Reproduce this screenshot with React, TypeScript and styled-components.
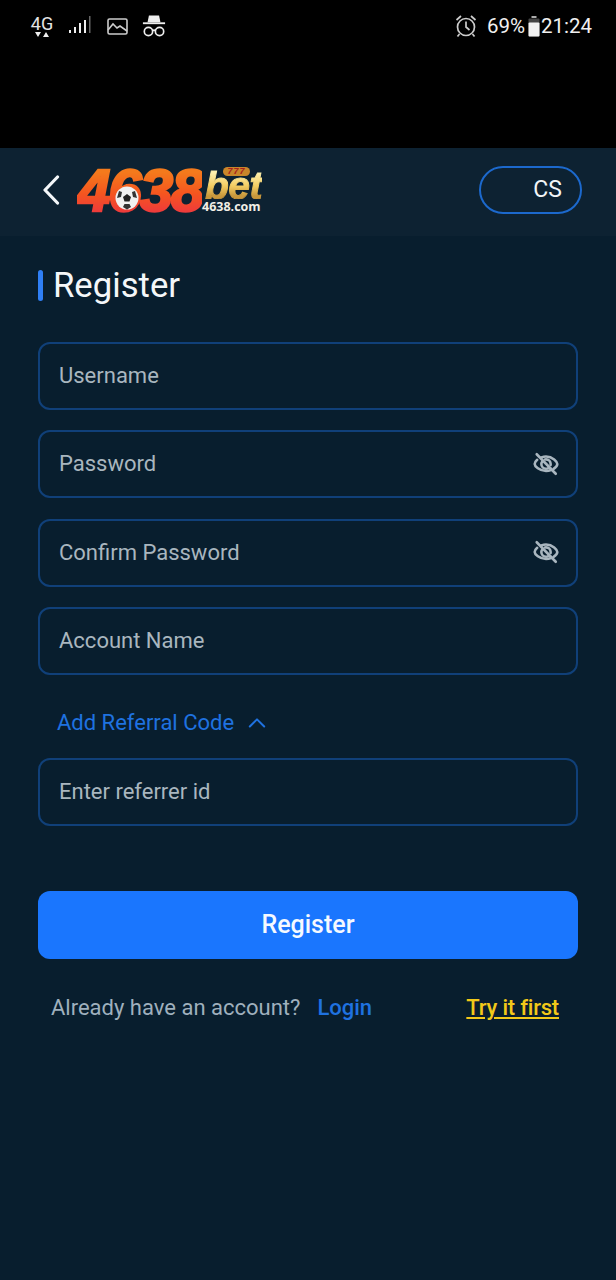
import React from "react";
import styled, { createGlobalStyle } from "styled-components";

const Global = createGlobalStyle`
  html, body { margin: 0; padding: 0; background: #081e2e; }
  * { box-sizing: border-box; }
  body { font-family: Roboto, "Liberation Sans", sans-serif; }
`;

const Page = styled.div`
  width: 616px;
  height: 1280px;
  background: #081e2e;
  display: flex;
  flex-direction: column;
  overflow: hidden;
`;

const StatusBar = styled.div`
  height: 148px;
  background: #000;
  padding: 12px 24px 0 30px;
  display: flex;
  align-items: flex-start;
  justify-content: space-between;
  color: #e8e8e8;
`;

const StatusGroup = styled.div`
  display: flex;
  align-items: center;
  height: 28px;
`;

const NetBlock = styled.div`
  display: flex;
  flex-direction: column;
  align-items: center;
  width: 24px;
  margin-right: 15px;
  font-size: 18px;
  line-height: 17px;
  color: #e4e4e4;
`;

const StatusText = styled.span`
  font-size: 20.500px;
  line-height: 28px;
  color: #f0f0f0;
`;

const Header = styled.header`
  height: 88px;
  background: #0d2232;
  display: flex;
  align-items: center;
  justify-content: space-between;
  padding: 0 34px 4px 42px;
`;

const HeaderLeft = styled.div`
  display: flex;
  align-items: center;
`;

const Logo = styled.div`
  position: relative;
  display: flex;
  align-items: flex-start;
  margin-left: 17px;
  width: 190px;
  height: 52px;
`;

const LogoDigits = styled.span`
  font-family: "Liberation Sans", sans-serif;
  font-style: italic;
  font-weight: 700;
  font-size: 60px;
  line-height: 54px;
  letter-spacing: -2px;
  -webkit-text-stroke: 2.500px transparent;
  background: linear-gradient(180deg, #f47a1c 15%, #f5551f 55%, #ee3a3c 90%);
  -webkit-background-clip: text;
  background-clip: text;
  color: transparent;
`;

const LogoBet = styled.span`
  position: absolute;
  left: 128px;
  top: 6px;
  height: 29px;
  font-family: "Liberation Sans", sans-serif;
  font-style: italic;
  font-weight: 700;
  font-size: 39px;
  line-height: 31px;
  letter-spacing: -0.500px;
  -webkit-text-stroke: 1px transparent;
  background: linear-gradient(180deg, #fff1ae 10%, #f3cd62 55%, #c8973b 90%);
  -webkit-background-clip: text;
  background-clip: text;
  color: transparent;
`;

const LogoDomain = styled.span`
  position: absolute;
  left: 125px;
  top: 36px;
  font-family: "Open Sans", sans-serif;
  font-weight: 700;
  font-size: 12.500px;
  line-height: 14px;
  color: #f2efe6;
`;

const Ball = styled.svg`
  position: absolute;
  left: 38px;
  top: 22px;
`;

const Slots = styled.span`
  position: absolute;
  left: 146px;
  top: 3px;
  width: 27px;
  height: 9px;
  border-radius: 5px;
  background: #c9862a;
  color: #a8221c;
  font-family: "Liberation Sans", sans-serif;
  font-weight: 700;
  font-style: italic;
  font-size: 9px;
  line-height: 9px;
  text-align: center;
  letter-spacing: 1px;
`;

const CsPill = styled.button`
  width: 103px;
  height: 48px;
  border: 2px solid #1c69cd;
  border-radius: 24px;
  background: transparent;
  color: #f2f5f7;
  font-family: Roboto, sans-serif;
  font-size: 23px;
  text-align: right;
  padding: 0 18px 2px 0;
`;

const Main = styled.main`
  padding: 29px 38px 0;
  display: flex;
  flex-direction: column;
`;

const Title = styled.h1`
  margin: 0 0 37px;
  font-size: 34.700px;
  line-height: 40px;
  font-weight: 400;
  color: #f4f7f9;
  display: flex;
  align-items: center;
  gap: 10px;
  &::before {
    content: "";
    width: 5px;
    height: 31px;
    border-radius: 3px;
    background: #2f7ff5;
  }
`;

const Fields = styled.div`
  display: flex;
  flex-direction: column;
  gap: 20.300px;
`;

const Field = styled.div`
  height: 68px;
  border: 2px solid #104079;
  border-radius: 12px;
  display: flex;
  align-items: center;
  justify-content: space-between;
  padding: 0 17px 1px 19px;
  font-size: 22px;
  color: #a9b6bf;
  background: #081e2e;
`;

const ReferralToggle = styled.div`
  display: flex;
  align-items: center;
  gap: 14px;
  margin: 33px 0 21px 19px;
  height: 29px;
  font-size: 22px;
  color: #1f72e0;
`;

const SubmitButton = styled.button`
  margin-top: 65px;
  height: 68px;
  border: none;
  border-radius: 12px;
  background: #1a76fe;
  color: #f5f9ff;
  font-family: Roboto, sans-serif;
  font-size: 25px;
  font-weight: 500;
`;

const Footer = styled.div`
  margin-top: 34px;
  display: flex;
  align-items: center;
  padding: 0 19px 0 13px;
  font-size: 22px;
  line-height: 30px;
`;

const Muted = styled.span`
  color: #9fb0bd;
`;

const LoginLink = styled.a`
  color: #1f72e0;
  font-weight: 500;
  margin-left: 17px;
`;

const TryLink = styled.a`
  color: #f2c919;
  font-weight: 500;
  letter-spacing: -0.200px;
  text-decoration: underline;
  margin-left: auto;
`;

const Eye = () => (
  <svg width="26" height="26" viewBox="0 0 28 28" fill="none" stroke="#a9b6bf" strokeWidth="2.800" strokeLinecap="round">
    <path d="M4.500 9.500C2.800 11 1.800 12.600 1.800 14c0 2.400 5 7.500 12.200 7.500 2 0 3.800-.4 5.400-1M9 6.900c1.500-.5 3.200-.9 5-.9 7.200 0 12.200 5.600 12.200 8 0 1.500-1.500 3.600-4 5.300" />
    <path d="M10 11.500c-.6.700-1 1.600-1 2.600 0 2.700 2.200 5 5 5 1 0 1.900-.3 2.600-.8M13 9.100c.3-.1.700-.1 1-.1 2.800 0 5 2.200 5 5 0 .4 0 .8-.1 1.100" />
    <path d="M4 3.500 24.500 24.500" />
  </svg>
);

export default function App() {
  return (
    <Page>
      <Global />
      <StatusBar>
        <StatusGroup>
          <NetBlock>
            4G
            <svg width="16" height="6" viewBox="0 0 16 6" fill="#eee">
              <path d="M1 0h6L4 5zM9 5h6l-3-5z" />
            </svg>
          </NetBlock>
          <svg width="22" height="20" viewBox="0 0 22 20" fill="#eee" style={{ marginRight: 16 }}>
            <rect x="0" y="14" width="2" height="3" />
            <rect x="5" y="11" width="2" height="6" />
            <rect x="10" y="7" width="2" height="10" />
            <rect x="15" y="4" width="2" height="13" />
            <rect x="20" y="0" width="1.500" height="17" fill="#666" />
          </svg>
          <svg width="21" height="17" viewBox="0 0 21 17" fill="none" stroke="#ccc" strokeWidth="1.600" style={{ marginRight: 14 }}>
            <rect x="1" y="1" width="19" height="15" rx="1.500" />
            <path d="M1 12 6 6l4 4 3-2 7 5" />
          </svg>
          <svg width="24" height="24" viewBox="0 0 26 26" fill="none" stroke="#eee" strokeWidth="1.800">
            <path d="M6 9 7.500 1.500h11L20 9z" fill="#eee" stroke="none" />
            <rect x="1" y="9" width="24" height="2" fill="#eee" stroke="none" />
            <circle cx="7" cy="19" r="4.500" />
            <circle cx="19" cy="19" r="4.500" />
            <path d="M11.500 18c1-.8 2-.8 3 0" />
          </svg>
        </StatusGroup>
        <StatusGroup>
          <svg width="22" height="24" viewBox="0 0 22 24" fill="none" stroke="#ccc" strokeWidth="1.700" style={{ marginRight: 10 }}>
            <circle cx="11" cy="13" r="8.500" />
            <path d="M11 7.500V13l3.500 3M1.500 6 6 2M20.500 6 16 2M4.500 20 2.500 22.500M17.500 20l2 2.500" />
          </svg>
          <StatusText>69%</StatusText>
          <svg width="12" height="21" viewBox="0 0 12 21" style={{ margin: "0 1px 0 3px" }}>
            <rect x="3.500" y="0" width="5" height="2" fill="#aaa" />
            <rect x="0.500" y="2.500" width="11" height="18" rx="1" fill="#444" />
            <rect x="0.500" y="6.500" width="11" height="14" rx="1" fill="#f2f2f2" />
          </svg>
          <StatusText>21:24</StatusText>
        </StatusGroup>
      </StatusBar>

      <Header>
        <HeaderLeft>
          <svg width="18" height="30" viewBox="0 0 18 30" fill="none" stroke="#f4f7f9" strokeWidth="3.200" strokeLinecap="round" strokeLinejoin="round">
            <path d="M15.500 2 3 15l12.500 13" />
          </svg>
          <Logo>
            <LogoDigits>4638</LogoDigits>
            <Ball width="24" height="24" viewBox="0 0 24 24">
              <circle cx="12" cy="12" r="11.500" fill="#f1f1f1" />
              <path d="M12 8l4 3-1.500 4.500h-5L8 11z" fill="#222" />
              <path d="M4 5l3 1-1 5-4 1zM20 5l-3 1 1 5 4 1zM8 21l1.500-3h5L16 21l-4 2.500z" fill="#333" />
            </Ball>
            <LogoBet>bet</LogoBet>
            <Slots>777</Slots>
            <LogoDomain>4638.com</LogoDomain>
          </Logo>
        </HeaderLeft>
        <CsPill>CS</CsPill>
      </Header>

      <Main>
        <Title>Register</Title>
        <Fields>
          <Field>Username</Field>
          <Field>
            Password
            <Eye />
          </Field>
          <Field>
            Confirm Password
            <Eye />
          </Field>
          <Field>Account Name</Field>
        </Fields>
        <ReferralToggle>
          Add Referral Code
          <svg width="18" height="11" viewBox="0 0 20 12" fill="none" stroke="#1f72e0" strokeWidth="2.200" strokeLinecap="round" strokeLinejoin="round">
            <path d="M2 10.500 10 2.500l8 8" />
          </svg>
        </ReferralToggle>
        <Field>Enter referrer id</Field>
        <SubmitButton>Register</SubmitButton>
        <Footer>
          <Muted>Already have an account?</Muted>
          <LoginLink>Login</LoginLink>
          <TryLink>Try it first</TryLink>
        </Footer>
      </Main>
    </Page>
  );
}
